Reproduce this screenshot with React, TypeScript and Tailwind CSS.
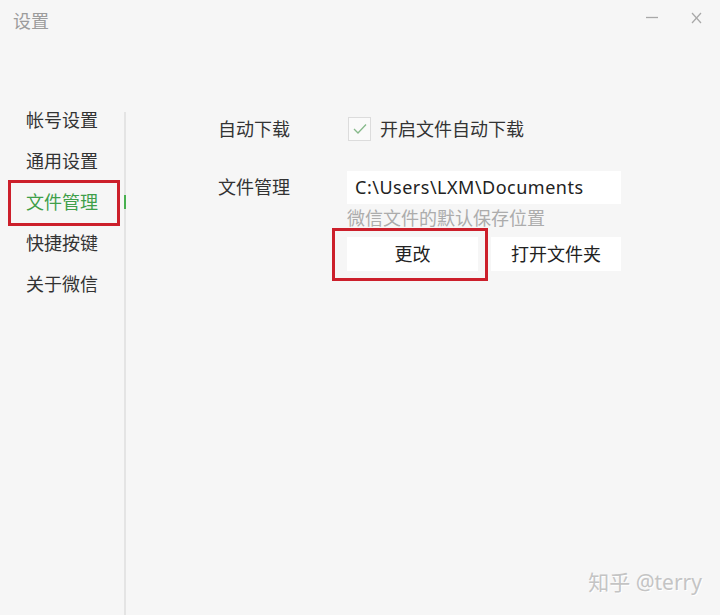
import React from "react";

const font = { fontFamily: '"Noto Sans", "Noto Sans CJK SC", sans-serif' };

export default function App() {
  const items = ["帐号设置", "通用设置", "文件管理", "快捷按键", "关于微信"];
  return (
    <div
      className="relative w-[720px] h-[615px] bg-[#f6f6f6] flex flex-col overflow-hidden text-[#333]"
      style={font}
    >
      {/* title bar */}
      <div className="h-[100px] shrink-0 flex items-start justify-between">
        <div className="pl-[13px] pt-[8px] text-[18px] leading-[26px] text-[#9c9c9c]">设置</div>
        <div className="flex items-center pt-[12px] pr-[18px] gap-[33px] text-[#a0a0a0]">
          <svg width="12" height="14" viewBox="0 0 12 14">
            <line x1="0" y1="5.5" x2="12" y2="5.5" stroke="#a8a8a8" strokeWidth="1.3" />
          </svg>
          <svg width="11" height="14" viewBox="0 0 11 14">
            <line x1="1" y1="1" x2="10" y2="11" stroke="#a8a8a8" strokeWidth="1.2" />
            <line x1="10" y1="1" x2="1" y2="11" stroke="#a8a8a8" strokeWidth="1.2" />
          </svg>
        </div>
      </div>

      <div className="flex flex-1">
        {/* sidebar */}
        <div className="w-[124px] flex flex-col">
          {items.map((t, i) => (
            <div
              key={t}
              className={`h-[41px] flex items-center pl-[26px] text-[18px] ${
                i === 2 ? "text-[#3f9f4a]" : "text-[#333]"
              }`}
            >
              {t}
            </div>
          ))}
        </div>
        <div className="relative w-[2px] mt-[12px] bg-[#e4e4e4]">
          <div className="absolute left-0 top-[83px] w-[2px] h-[14px] bg-[#48b04f]" />
        </div>

        {/* content */}
        <div className="flex-1 pl-[92px] pt-[16px] flex flex-col">
          <div className="flex items-center h-[26px]">
            <div className="w-[130px] text-[18px] leading-[26px]">自动下载</div>
            <div className="flex items-center gap-[9px]">
              <div className="w-[23px] h-[24px] border border-[#dcdcdc] bg-[#fafafa] flex items-center justify-center">
                <svg width="14" height="12" viewBox="0 0 14 12">
                  <polyline
                    points="1,6 5,10 13,1.5"
                    fill="none"
                    stroke="#86b98a"
                    strokeWidth="1.3"
                  />
                </svg>
              </div>
              <span className="text-[18px] leading-[26px]">开启文件自动下载</span>
            </div>
          </div>

          <div className="flex mt-[29px]">
            <div className="w-[129px] h-[33px] flex items-center text-[18px]">文件管理</div>
            <div className="flex flex-col">
              <div className="w-[274px] h-[33px] bg-white flex items-center pl-[8px] text-[18px] tracking-[0.5px] text-[#222]">
                C:\Users\LXM\Documents
              </div>
              <div className="mt-[1px] h-[26px] leading-[26px] text-[18px] text-[#acacac]">
                微信文件的默认保存位置
              </div>
              <div className="mt-[6px] flex gap-[13px]">
                <div className="w-[131px] h-[34px] bg-white flex items-center justify-center text-[18px] text-[#222]">
                  更改
                </div>
                <div className="w-[130px] h-[34px] bg-white flex items-center justify-center text-[18px] text-[#222]">
                  打开文件夹
                </div>
              </div>
            </div>
          </div>
        </div>
      </div>

      {/* annotation boxes */}
      <div className="absolute left-[8px] top-[180px] w-[112px] h-[46px] border-[3px] border-[#cc1f2b]" />
      <div className="absolute left-[332px] top-[228px] w-[156px] h-[53px] border-[3px] border-[#cc1f2b]" />

      {/* watermark */}
      <div
        className="absolute right-[18px] top-[567px] text-[21px] leading-[30px] text-[#c4c4c4]"
        style={{ textShadow: "1px 1px 0 #ffffff" }}
      >
        知乎 @terry
      </div>
    </div>
  );
}
